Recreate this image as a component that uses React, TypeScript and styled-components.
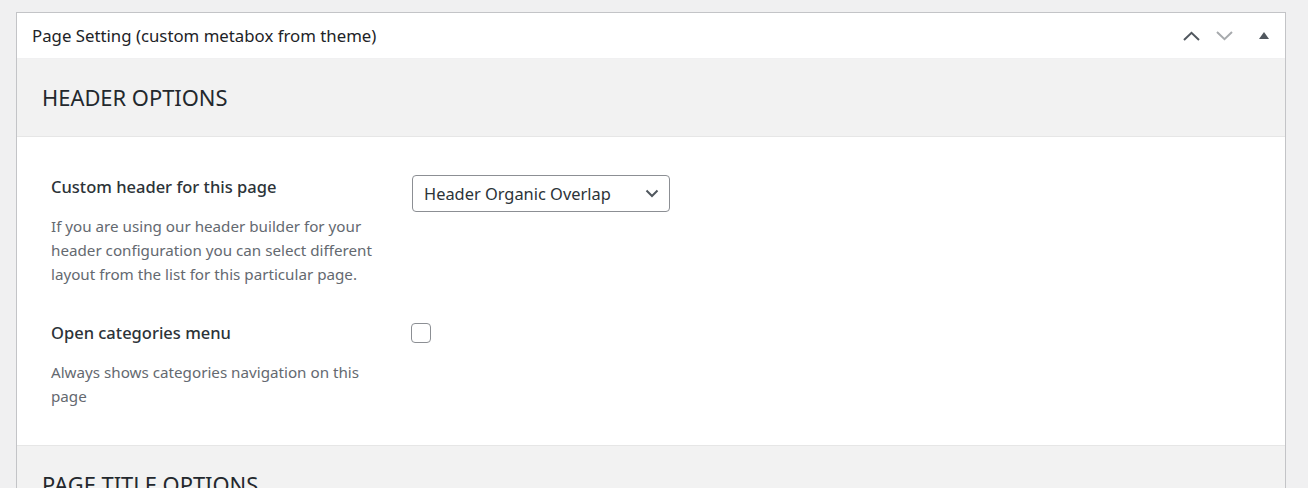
import React from 'react';
import styled, { createGlobalStyle } from 'styled-components';

const GlobalStyle = createGlobalStyle`
  html, body {
    margin: 0;
    padding: 0;
    background: #f0f0f1;
    font-family: "Noto Sans", "Open Sans", sans-serif;
    color: #1d2327;
  }
`;

const Page = styled.div`
  padding: 12px 22px 0 16px;
  height: 488px;
  box-sizing: border-box;
  overflow: hidden;
`;

const Postbox = styled.div`
  background: #fff;
  border: 1px solid #c3c4c7;
  border-bottom: none;
`;

const PostboxHeader = styled.div`
  display: flex;
  align-items: center;
  justify-content: space-between;
  height: 45px;
  padding: 0 6px 0 15px;
  border-bottom: 1px solid #f0f0f1;
`;

const PostboxTitle = styled.h2`
  margin: 0;
  font-size: 16.8px;
  font-weight: 400;
  color: #1d2327;
`;

const Actions = styled.div`
  display: flex;
  align-items: center;
  gap: 16px;
`;

const IconButton = styled.button<{ $muted?: boolean; $wide?: boolean }>`
  display: flex;
  align-items: center;
  justify-content: center;
  width: ${(p) => (p.$wide ? '30px' : '17px')};
  height: 20px;
  padding: 0;
  border: none;
  background: none;
  color: ${(p) => (p.$muted ? '#a7aaad' : '#50575e')};
  cursor: pointer;
`;

const SectionHead = styled.div`
  background: #f2f2f2;
  height: 77px;
  padding: 0 25px;
  display: flex;
  align-items: center;
  border-bottom: 1px solid #e6e6e6;
  flex-shrink: 0;
`;

const SectionTitle = styled.h3`
  margin: 0;
  font-size: 21.9px;
  font-weight: 400;
  color: #23282d;
`;

const SectionBody = styled.div`
  padding: 38px 34px 37px;
  display: flex;
  flex-direction: column;
  gap: 35px;
  border-bottom: 1px solid #e6e6e6;
`;

const FieldRow = styled.div`
  display: grid;
  grid-template-columns: 361px 1fr;
  align-items: start;
`;

const FieldInfo = styled.div`
  display: flex;
  flex-direction: column;
  gap: 15px;
`;

const FieldLabel = styled.div`
  font-size: 16.5px;
  font-weight: 500;
  color: #2c3338;
  line-height: 24px;
`;

const FieldDesc = styled.p`
  margin: 0;
  font-size: 15.2px;
  line-height: 24px;
  color: #646970;
  max-width: 330px;
`;

const SelectBox = styled.div`
  display: flex;
  align-items: center;
  justify-content: space-between;
  width: 258px;
  height: 37px;
  box-sizing: border-box;
  padding: 0 10px 0 11px;
  border: 1px solid #8c8f94;
  border-radius: 4px;
  font-size: 16.4px;
  color: #2c3338;
  background: #fff;
`;

const Checkbox = styled.span`
  display: block;
  width: 20px;
  height: 20px;
  box-sizing: border-box;
  margin: 2px 0 0 -1px;
  border: 1px solid #8c8f94;
  border-radius: 4px;
  background: #fff;
`;

const ChevronUp = () => (
  <svg width="17" height="10" viewBox="0 0 17 10" fill="none">
    <path d="M1 9L8.5 1.8L16 9" stroke="currentColor" strokeWidth="2" />
  </svg>
);

const ChevronDown = () => (
  <svg width="17" height="10" viewBox="0 0 17 10" fill="none">
    <path d="M1 1L8.5 8.2L16 1" stroke="currentColor" strokeWidth="2" />
  </svg>
);

const Triangle = () => (
  <svg width="10" height="7" viewBox="0 0 10 7">
    <path d="M5 0L10 7H0Z" fill="currentColor" />
  </svg>
);

const SelectChevron = () => (
  <svg width="14" height="9" viewBox="0 0 14 9" fill="none">
    <path d="M1.5 1.5L7 7L12.5 1.5" stroke="#50575e" strokeWidth="2" />
  </svg>
);

export default function App() {
  return (
    <>
      <GlobalStyle />
      <Page>
        <Postbox>
          <PostboxHeader>
            <PostboxTitle>Page Setting (custom metabox from theme)</PostboxTitle>
            <Actions>
              <IconButton aria-label="Move up">
                <ChevronUp />
              </IconButton>
              <IconButton $muted aria-label="Move down">
                <ChevronDown />
              </IconButton>
              <IconButton $wide aria-label="Toggle panel">
                <Triangle />
              </IconButton>
            </Actions>
          </PostboxHeader>

          <SectionHead>
            <SectionTitle>HEADER OPTIONS</SectionTitle>
          </SectionHead>

          <SectionBody>
            <FieldRow>
              <FieldInfo>
                <FieldLabel>Custom header for this page</FieldLabel>
                <FieldDesc>
                  If you are using our header builder for your header configuration you can
                  select different layout from the list for this particular page.
                </FieldDesc>
              </FieldInfo>
              <SelectBox>
                <span>Header Organic Overlap</span>
                <SelectChevron />
              </SelectBox>
            </FieldRow>

            <FieldRow>
              <FieldInfo>
                <FieldLabel>Open categories menu</FieldLabel>
                <FieldDesc>Always shows categories navigation on this page</FieldDesc>
              </FieldInfo>
              <Checkbox />
            </FieldRow>
          </SectionBody>

          <SectionHead>
            <SectionTitle>PAGE TITLE OPTIONS</SectionTitle>
          </SectionHead>
        </Postbox>
      </Page>
    </>
  );
}
